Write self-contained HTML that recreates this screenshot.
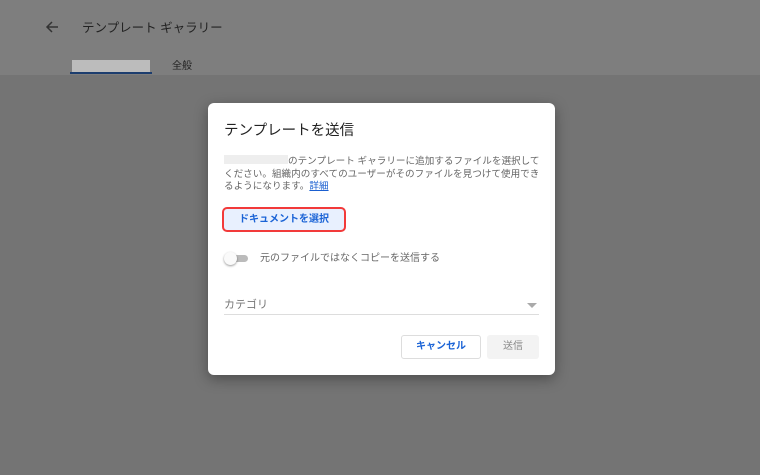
<!DOCTYPE html>
<html><head><meta charset="utf-8"><style>
*{margin:0;padding:0;box-sizing:border-box}
body{width:760px;height:475px;overflow:hidden;background:#747474;font-family:"Liberation Sans","Noto Sans CJK JP",sans-serif;position:relative}
.top{position:absolute;left:0;top:0;width:760px;height:75px;background:#7e7e7e}
.t{position:absolute;color:#222}
.dlg{position:absolute;left:208px;top:103px;width:347px;height:272px;background:#fff;border-radius:6px;box-shadow:0 4px 14px rgba(0,0,0,.35)}
.d{position:absolute;font-size:10px;color:#666;line-height:15px}
</style></head><body>
<div class="top"></div>
<svg style="position:absolute;left:44px;top:19px" width="16" height="16" viewBox="0 0 16 16"><path d="M14 8H3M8 3L3 8l5 5" stroke="#333" stroke-width="1.5" fill="none"/></svg>
<div class="t" style="left:82px;top:17px;font-size:12.5px">テンプレート ギャラリー</div>
<div style="position:absolute;left:72px;top:60px;width:78px;height:12px;background:#bcbcbc"></div>
<div style="position:absolute;left:70px;top:72px;width:82px;height:2px;background:#1c3d6e"></div>
<div class="t" style="left:172px;top:57px;font-size:10px">全般</div>
<div class="dlg">
<div class="d" style="left:16px;top:18px;font-size:14.5px;color:#222;line-height:20px">テンプレートを送信</div>
<div class="d" style="left:16px;top:52px;width:318px;font-size:9.6px;line-height:12.6px"><span style="display:inline-block;width:64px;height:9px;background:#eee"></span>のテンプレート ギャラリーに追加するファイルを選択してください。組織内のすべてのユーザーがそのファイルを見つけて使用できるようになります。<span style="color:#1a5fd0;text-decoration:underline">詳細</span></div>
<div style="position:absolute;left:14px;top:104px;width:124px;height:25px;border:2.5px solid #f23a3a;border-radius:5px;background:#e8f0fe;color:#1a63d6;font-size:10px;font-weight:bold;text-align:center;line-height:21px">ドキュメントを選択</div>
<div style="position:absolute;left:22px;top:152px;width:18px;height:7px;border-radius:4px;background:#bbb"></div>
<div style="position:absolute;left:16px;top:149px;width:13px;height:13px;border-radius:50%;background:#fafafa;box-shadow:0 1px 2px rgba(0,0,0,.4)"></div>
<div class="d" style="left:52px;top:148px">元のファイルではなくコピーを送信する</div>
<div class="d" style="left:16px;top:195px;font-size:11px;color:#777">カテゴリ</div>
<div style="position:absolute;left:319px;top:200px;border-left:5px solid transparent;border-right:5px solid transparent;border-top:5px solid #aaa"></div>
<div style="position:absolute;left:16px;top:211px;width:315px;height:1px;background:#ddd"></div>
<div style="position:absolute;left:193px;top:232px;width:80px;height:24px;border:1px solid #ddd;border-radius:3px;color:#1a63d6;font-size:10px;font-weight:bold;text-align:center;line-height:22px">キャンセル</div>
<div style="position:absolute;left:279px;top:232px;width:52px;height:24px;background:#f3f3f3;border-radius:3px;color:#888;font-size:10px;text-align:center;line-height:24px">送信</div>
</div>
</body></html>
